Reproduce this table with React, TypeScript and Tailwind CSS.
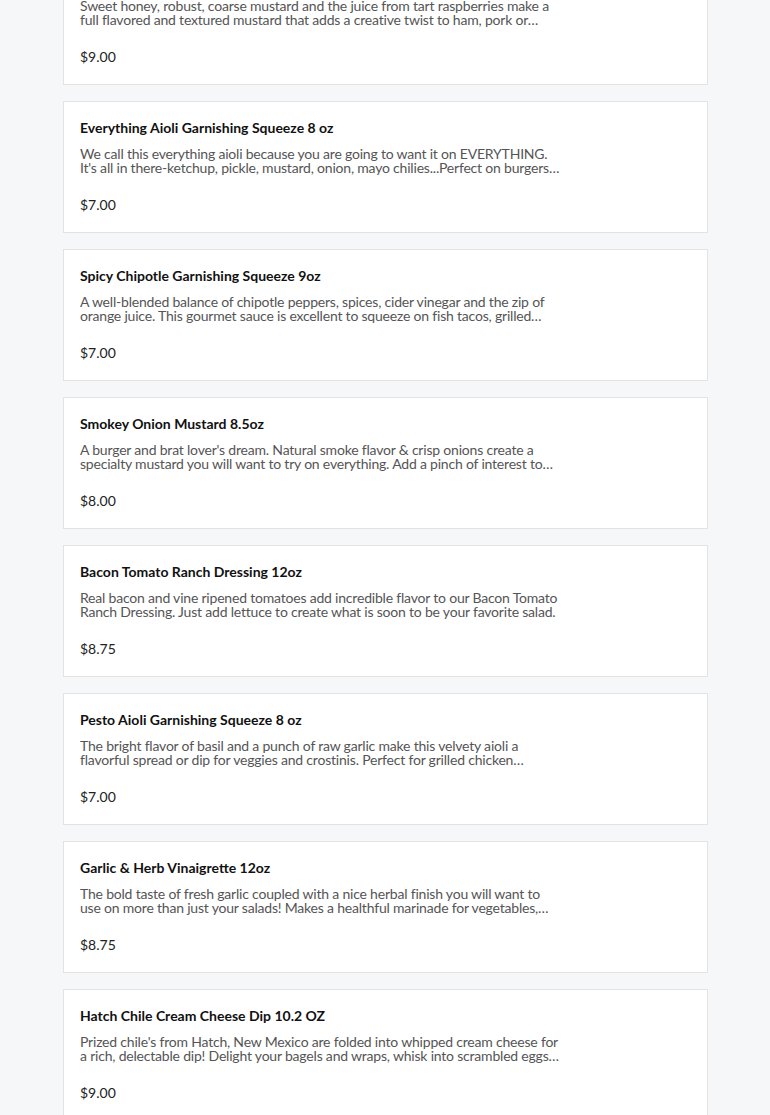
import React from 'react'

type Product = {
  name: string
  description: string
  price: string
}

const products: Product[] = [
  {
    name: 'Raspberry Honey Mustard 10oz',
    description:
      'Sweet honey, robust, coarse mustard and the juice from tart raspberries make a full flavored and textured mustard that adds a creative twist to ham, pork or chicken. Great on sandwiches and pretzels.',
    price: '$9.00',
  },
  {
    name: 'Everything Aioli Garnishing Squeeze 8 oz',
    description:
      "We call this everything aioli because you are going to want it on EVERYTHING. It's all in there-ketchup, pickle, mustard, onion, mayo chilies...Perfect on burgers, hot dogs, brats and sandwiches.",
    price: '$7.00',
  },
  {
    name: 'Spicy Chipotle Garnishing Squeeze 9oz',
    description:
      'A well-blended balance of chipotle peppers, spices, cider vinegar and the zip of orange juice. This gourmet sauce is excellent to squeeze on fish tacos, grilled meats and burritos.',
    price: '$7.00',
  },
  {
    name: 'Smokey Onion Mustard 8.5oz',
    description:
      "A burger and brat lover's dream. Natural smoke flavor & crisp onions create a specialty mustard you will want to try on everything. Add a pinch of interest to your dips and dressings.",
    price: '$8.00',
  },
  {
    name: 'Bacon Tomato Ranch Dressing 12oz',
    description:
      'Real bacon and vine ripened tomatoes add incredible flavor to our Bacon Tomato Ranch Dressing. Just add lettuce to create what is soon to be your favorite salad.',
    price: '$8.75',
  },
  {
    name: 'Pesto Aioli Garnishing Squeeze 8 oz',
    description:
      'The bright flavor of basil and a punch of raw garlic make this velvety aioli a flavorful spread or dip for veggies and crostinis. Perfect for grilled chicken sandwiches and paninis.',
    price: '$7.00',
  },
  {
    name: 'Garlic & Herb Vinaigrette 12oz',
    description:
      'The bold taste of fresh garlic coupled with a nice herbal finish you will want to use on more than just your salads! Makes a healthful marinade for vegetables, chicken and fish.',
    price: '$8.75',
  },
  {
    name: 'Hatch Chile Cream Cheese Dip 10.2 OZ',
    description:
      "Prized chile's from Hatch, New Mexico are folded into whipped cream cheese for a rich, delectable dip! Delight your bagels and wraps, whisk into scrambled eggs or serve with chips.",
    price: '$9.00',
  },
]

const ProductCard = ({ product }: { product: Product }) => {
  return (
    <div className="bg-white border border-[#e3e3e3] px-4 pt-4 pb-[17px]">
      <h3 className="text-[14px] leading-[20px] font-bold text-[#111]">{product.name}</h3>
      <p className="mt-[9px] w-[480px] text-[14px] leading-[14px] tracking-[-0.2px] text-[#555] line-clamp-2">
        {product.description}
      </p>
      <div className="mt-5 text-[14px] leading-[20px] text-[#222]">{product.price}</div>
    </div>
  )
}

const App = () => {
  return (
    <div
      className="min-h-screen bg-[#f6f7f8] overflow-hidden"
      style={{ fontFamily: 'Lato, "Open Sans", sans-serif' }}
    >
      <div className="w-[645px] ml-[63px] -mt-[47px] flex flex-col gap-4 pb-8">
        {products.map((p) => (
          <ProductCard key={p.name} product={p} />
        ))}
      </div>
    </div>
  )
}

export default App
